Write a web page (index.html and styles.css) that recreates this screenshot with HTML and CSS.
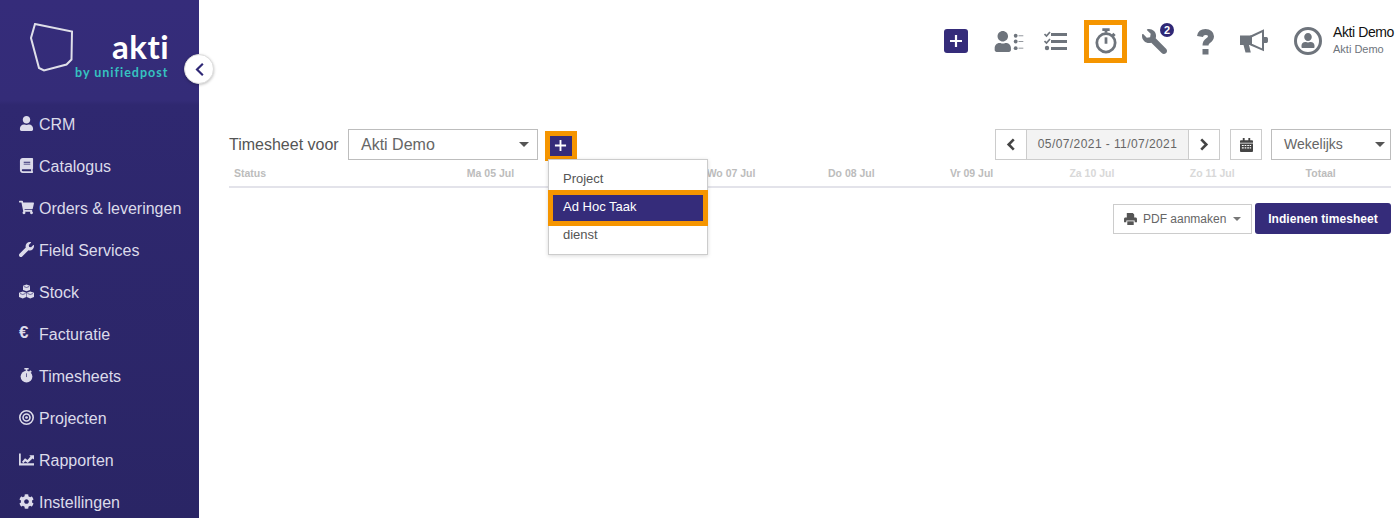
FILE: index.html
```html
<!DOCTYPE html>
<html lang="nl">
<head>
<meta charset="utf-8">
<title>Timesheet</title>
<link rel="stylesheet" href="styles.css">
</head>
<body>
<div class="app">
  <aside class="sidebar">
    <div class="brand">
      <svg class="brand-mark" viewBox="0 0 46 52"><path d="M5 1l37 7.500-.5 28-5 5L14 47.500 9 45 1 15z"/></svg>
      <div class="brand-name">akti</div>
      <div class="brand-sub">by unifiedpost</div>
    </div>
    <nav class="menu">
      <a class="menu-item"><svg class="mi" viewBox="0 0 448 512"><path d="M224 256c70.700 0 128-57.300 128-128S294.700 0 224 0 96 57.300 96 128s57.300 128 128 128zm89.600 32h-16.700c-22.200 10.200-46.900 16-72.900 16s-50.600-5.800-72.900-16h-16.700C60.200 288 0 348.200 0 422.400V464c0 26.500 21.500 48 48 48h352c26.500 0 48-21.500 48-48v-41.600c0-74.200-60.200-134.400-134.400-134.400z"/></svg>CRM</a>
      <a class="menu-item"><svg class="mi" viewBox="0 0 448 512"><path d="M448 360V24c0-13.300-10.700-24-24-24H96C43 0 0 43 0 96v320c0 53 43 96 96 96h328c13.300 0 24-10.700 24-24v-16c0-7.500-3.500-14.300-8.900-18.700-4.200-15.400-4.200-59.300 0-74.700 5.400-4.300 8.900-11.100 8.900-18.600zM128 134c0-3.300 2.700-6 6-6h212c3.300 0 6 2.700 6 6v20c0 3.300-2.700 6-6 6H134c-3.300 0-6-2.700-6-6v-20zm0 64c0-3.300 2.700-6 6-6h212c3.300 0 6 2.700 6 6v20c0 3.300-2.700 6-6 6H134c-3.300 0-6-2.700-6-6v-20zm253.400 250H96c-17.700 0-32-14.300-32-32 0-17.600 14.400-32 32-32h285.400c-1.900 17.100-1.900 46.900 0 64z"/></svg>Catalogus</a>
      <a class="menu-item"><svg class="mi" viewBox="0 0 576 512"><path d="M528.120 301.319l47.273-208C578.806 78.301 567.391 64 551.990 64H159.208l-9.166-44.810C147.758 8.021 137.930 0 126.529 0H24C10.745 0 0 10.745 0 24v16c0 13.255 10.745 24 24 24h69.883l70.248 343.435C147.325 417.100 136 435.222 136 456c0 30.928 25.072 56 56 56s56-25.072 56-56c0-15.674-6.447-29.835-16.824-40h209.647C430.447 426.165 424 440.326 424 456c0 30.928 25.072 56 56 56s56-25.072 56-56c0-22.172-12.888-41.332-31.579-50.405l5.517-24.276c3.413-15.018-8.002-29.319-23.403-29.319H218.117l-6.545-32h293.145c11.206 0 20.920-7.754 23.403-18.681z"/></svg>Orders &amp; leveringen</a>
      <a class="menu-item"><svg class="mi" viewBox="0 0 512 512"><path d="M507.730 109.100c-2.240-9.030-13.540-12.090-20.120-5.510l-74.360 74.360-67.880-11.310-11.310-67.880 74.360-74.360c6.620-6.620 3.430-17.900-5.660-20.160-47.380-11.740-99.550.91-136.580 37.930-39.640 39.640-50.550 97.100-34.050 147.200L18.740 402.760c-24.990 24.990-24.990 65.510 0 90.500 24.990 24.990 65.510 24.990 90.500 0l213.210-213.210c50.120 16.710 107.470 5.680 147.370-34.220 37.070-37.070 49.700-89.320 37.910-136.730z"/></svg>Field Services</a>
      <a class="menu-item"><svg class="mi" viewBox="0 0 30 30"><path d="M15 1l7 2.500V12l-7 2.500L8 12V3.500zM7.500 15l7 2.500V26l-7 3L0 26v-8.500zM22.500 15l7.500 2.500V26l-7.500 3-7-3v-8.500z"/><path class="mi-cut" d="M9.500 5L15 7l5.500-2M2 19l5.500 2 5.500-2M17 19l5.500 2 5.500-2"/></svg>Stock</a>
      <a class="menu-item"><span class="mi-euro">€</span>Facturatie</a>
      <a class="menu-item"><svg class="mi" viewBox="0 0 24 28"><path d="M8 0h8v3h-2.500v2.500h-3V3H8z"/><path d="M19 4l3 3-2.500 2.500-3-3z"/><circle cx="12" cy="16" r="11"/><path class="mi-cut" d="M12 10v7"/></svg>Timesheets</a>
      <a class="menu-item"><svg class="mi" viewBox="0 0 28 28"><circle class="mi-ring" cx="14" cy="14" r="12.500"/><circle class="mi-ring" cx="14" cy="14" r="6.500"/><circle cx="14" cy="14" r="2.500"/></svg>Projecten</a>
      <a class="menu-item"><svg class="mi" viewBox="0 0 30 24"><path d="M3.500 19.500H30V24H0V0h3.500z"/><path d="M6 16.500l6-7 5 3.500 6-7-2.500-2.500H30v8.500L27 10l-9.500 9-5-3.500-4 4z"/></svg>Rapporten</a>
      <a class="menu-item"><svg class="mi" viewBox="0 0 512 512"><path d="M487.400 315.700l-42.600-24.600c4.300-23.200 4.300-47 0-70.200l42.600-24.600c4.900-2.800 7.100-8.600 5.500-14-11.100-35.600-30-67.800-54.700-94.600-3.800-4.100-10-5.100-14.800-2.300L380.800 110c-17.900-15.400-38.500-27.300-60.800-35.100V25.800c0-5.600-3.900-10.500-9.400-11.700-36.700-8.200-74.300-7.800-109.200 0-5.500 1.200-9.400 6.100-9.400 11.700V75c-22.200 7.900-42.800 19.800-60.800 35.100L88.700 85.500c-4.900-2.800-11-1.900-14.800 2.300-24.700 26.700-43.600 58.900-54.700 94.600-1.700 5.400.6 11.200 5.500 14L67.300 221c-4.300 23.200-4.300 47 0 70.200l-42.600 24.600c-4.900 2.800-7.100 8.600-5.500 14 11.100 35.600 30 67.800 54.700 94.600 3.800 4.100 10 5.100 14.800 2.300l42.600-24.600c17.900 15.400 38.500 27.300 60.800 35.100v49.200c0 5.600 3.900 10.500 9.400 11.700 36.700 8.200 74.300 7.800 109.200 0 5.500-1.200 9.400-6.100 9.400-11.700v-49.200c22.200-7.900 42.800-19.800 60.800-35.100l42.600 24.600c4.900 2.800 11 1.900 14.800-2.300 24.700-26.700 43.600-58.900 54.700-94.600 1.500-5.500-.7-11.300-5.600-14.100zM256 336c-44.100 0-80-35.900-80-80s35.900-80 80-80 80 35.900 80 80-35.900 80-80 80z"/></svg>Instellingen</a>
    </nav>
    <button class="collapse"><svg viewBox="0 0 12 18"><path d="M10 2L3 9l7 7"/></svg></button>
  </aside>

  <main class="content">
    <header class="topbar">
      <button class="add-square"><svg viewBox="0 0 14 14"><path d="M7 1v12M1 7h12"/></svg></button>
      <svg class="ti ti-people" viewBox="0 0 30 22"><path d="M8.500 11c3 0 5.500-2.400 5.500-5.500S11.500 0 8.500 0 3 2.400 3 5.500 5.500 11 8.500 11zm3.500 1.500h-1c-.8.400-1.600.6-2.500.6s-1.700-.2-2.500-.6H5c-2.800 0-5 2.300-5 5.200V20c0 1.100.9 2 2 2h13c1.100 0 2-.9 2-2v-2.300c0-2.900-2.200-5.200-5-5.200z"/><circle cx="22" cy="5" r="2"/><circle cx="22" cy="11" r="2"/><circle cx="22" cy="18" r="2"/><path class="ti-thin" d="M25 5h5M25 11h5M25 18h5"/></svg>
      <svg class="ti ti-tasks" viewBox="0 0 24 20"><path class="ti-check" d="M.5 3l2 2L6 1M.5 10l2 2L6 8"/><circle cx="3" cy="17" r="2.200"/><path class="ti-bar" d="M7 3.500h16M7 10.500h16M7 17.500h16"/></svg>
      <div class="timer-box"><svg class="ti-timer" viewBox="0 0 24 28"><path class="ti-timer-s" d="M8 1.500h8M12 2v3M19 6l2.500 2.500"/><circle class="ti-timer-s" cx="12" cy="16" r="10"/><path class="ti-timer-s" d="M12 10v7"/></svg></div>
      <div class="wrench-wrap">
        <svg class="ti ti-wrench" viewBox="0 0 512 512"><path d="M507.730 109.100c-2.240-9.030-13.540-12.090-20.120-5.510l-74.360 74.360-67.880-11.310-11.310-67.880 74.360-74.360c6.620-6.620 3.430-17.900-5.660-20.160-47.380-11.740-99.550.91-136.580 37.930-39.640 39.640-50.550 97.100-34.050 147.200L18.740 402.760c-24.990 24.990-24.990 65.510 0 90.500 24.990 24.990 65.510 24.990 90.500 0l213.210-213.210c50.120 16.710 107.470 5.680 147.370-34.220 37.070-37.070 49.700-89.320 37.910-136.730z"/></svg>
        <span class="badge">2</span>
      </div>
      <svg class="ti ti-help" viewBox="0 0 17 26"><path class="ti-help-s" d="M3 7.500C3.500 4 5.500 3 8.500 3c3.500 0 5.500 1.800 5.500 4.300 0 2.200-1.200 3.300-3 4.500-1.800 1.200-2.500 2-2.500 4.700"/><rect x="5.500" y="20" width="6" height="5.500"/></svg>
      <svg class="ti ti-mega" viewBox="0 0 28 24"><path d="M0 6.500h11V16H9l1.800 7.500H5.500L3.500 16H0z"/><path class="ti-mega-s" d="M11 7.500L23 1.800v19L11 15.500z"/><path d="M24 8h2.500c1 0 1.500.8 1.500 3s-.5 3-1.500 3H24z"/></svg>
      <svg class="ti ti-user" viewBox="0 0 28 28"><circle class="ti-user-ring" cx="14" cy="14" r="12.500"/><path d="M14 14c2.200 0 3.800-1.800 3.800-4S16.200 6 14 6s-3.800 1.800-3.800 4 1.600 4 3.800 4zm2.600 1h-.6c-.6.300-1.300.5-2 .5s-1.400-.2-2-.5h-.6C9 15 7.500 16.600 7.500 18.500V20c0 .6.400 1 1 1h11c.6 0 1-.4 1-1v-1.500c0-1.900-1.500-3.500-3.900-3.500z"/></svg>
      <div class="account">
        <div class="account-name">Akti Demo</div>
        <div class="account-org">Akti Demo</div>
      </div>
    </header>

    <section class="toolbar">
      <label class="for-label">Timesheet voor</label>
      <div class="select select-user"><span>Akti Demo</span><i class="caret"></i></div>
      <div class="add-wrap">
        <button class="add-small"><svg viewBox="0 0 14 14"><path d="M7 1v12M1 7h12"/></svg></button>
        <ul class="dropdown">
          <li class="dropdown-item">Project</li>
          <li class="dropdown-item dropdown-item-active">Ad Hoc Taak</li>
          <li class="dropdown-item">dienst</li>
        </ul>
      </div>
      <div class="range">
        <button class="range-btn"><svg viewBox="0 0 10 14"><path d="M8 1.500L2.500 7 8 12.500"/></svg></button>
        <div class="range-value">05/07/2021 - 11/07/2021</div>
        <button class="range-btn"><svg viewBox="0 0 10 14"><path d="M2 1.500L7.500 7 2 12.500"/></svg></button>
      </div>
      <button class="cal-btn"><svg viewBox="0 0 14 15"><path d="M0 3.500a1 1 0 0 1 1-1h2V0h2v2.500h4V0h2v2.500h2a1 1 0 0 1 1 1V5H0z"/><path d="M0 6h14v8a1 1 0 0 1-1 1H1a1 1 0 0 1-1-1zm2 1.500v1.200h2V7.500zm3 0v1.200h1.800V7.500zm2.800 0v1.200h1.800V7.500zm2.600 0v1.200H12V7.500zM2 10v1.200h2V10zm3 0v1.200h1.800V10zm2.800 0v1.200h1.800V10zm2.600 0v1.200H12V10z" fill-rule="evenodd"/></svg></button>
      <div class="select select-period"><span>Wekelijks</span><i class="caret"></i></div>
    </section>

    <div class="thead">
      <div class="th th-status">Status</div>
      <div class="th">Ma 05 Jul</div>
      <div class="th"></div>
      <div class="th">Wo 07 Jul</div>
      <div class="th">Do 08 Jul</div>
      <div class="th">Vr 09 Jul</div>
      <div class="th th-weekend">Za 10 Jul</div>
      <div class="th th-weekend">Zo 11 Jul</div>
      <div class="th th-total">Totaal</div>
    </div>

    <div class="actions">
      <button class="btn-pdf"><svg viewBox="0 0 14 13"><path d="M3 0h6.500L11 1.500V5H3zM0 6.500C0 5.700.7 5 1.500 5h11c.8 0 1.500.7 1.500 1.500V10h-2.500V8h-9v2H0z"/><path d="M3.500 9h7v4h-7z"/></svg><span class="btn-pdf-label">PDF aanmaken</span><i class="caret caret-sm"></i></button>
      <button class="btn-submit">Indienen timesheet</button>
    </div>
  </main>
</div>
</body>
</html>
```
FILE: styles.css
```css
* { box-sizing: border-box; }
html, body { margin: 0; height: 100%; overflow: hidden; background: #fff; }
body { font-family: "Liberation Sans", Arial, sans-serif; color: #555; }
button { font-family: inherit; padding: 0; cursor: pointer; }
svg { display: block; }

.app { display: flex; height: 518px; }

/* Sidebar */
.sidebar {
  position: relative;
  flex: 0 0 199px;
  display: flex;
  flex-direction: column;
  background: linear-gradient(#352c7a 0, #342c78 100px, #2f2870 105px, #2a2565 100%);
}
.brand { position: relative; height: 104px; flex: none; }
.brand-mark {
  position: absolute; left: 30px; top: 23px;
  width: 46px; height: 52px;
  fill: none; stroke: #dfdfe9; stroke-width: 2;
}
.brand-name {
  position: absolute; left: 112px; top: 27px;
  font-family: Lato, sans-serif; font-weight: 700; font-size: 33px; line-height: 38px;
  color: #fff; letter-spacing: .5px;
}
.brand-sub {
  position: absolute; left: 75px; top: 65px;
  font-family: Lato, sans-serif; font-weight: 700; font-size: 12.500px; line-height: 16px;
  color: #36c2c0; letter-spacing: 1px; white-space: nowrap;
}
.menu { display: flex; flex-direction: column; }
.menu-item {
  display: flex; align-items: center;
  height: 42px; padding-left: 19px;
  font-size: 16px; color: #dcdbea; white-space: nowrap;
}
.mi { width: 15px; height: 15px; margin-right: 5px; fill: #dcdbea; flex: none; margin-top: -4px; overflow: visible; }
.mi-cut { fill: none; stroke: #2f2870; stroke-width: 1.300; }
.mi-ring { fill: none; stroke: #dcdbea; stroke-width: 3; }
.mi-euro { width: 20px; font-weight: 700; font-size: 17px; margin-top: -4px; color: #dcdbea; }
.collapse {
  position: absolute; left: 184px; top: 54px;
  width: 30px; height: 30px; border-radius: 50%;
  border: 1px solid #ddd; background: #fff;
  box-shadow: 0 1px 3px rgba(0,0,0,.25);
  display: flex; align-items: center; justify-content: center;
}
.collapse svg { width: 11px; height: 15px; fill: none; stroke: #2f2876; stroke-width: 2.600; }

/* Main */
.content { position: relative; flex: 1; padding: 0 8px 0 30px; min-width: 0; }
.topbar {
  display: flex; align-items: center; justify-content: flex-end;
  height: 129px; padding-bottom: 47px; margin-right: -2px;
}
.add-square {
  width: 24px; height: 24px; border: 0; border-radius: 3px; background: #352c7a;
  display: flex; align-items: center; justify-content: center;
}
.add-square svg { width: 14px; height: 14px; stroke: #fff; stroke-width: 2.200; fill: none; }
.ti { fill: #6e747c; flex: none; }
.ti-people { width: 30px; height: 21px; margin-left: 26px; margin-top: 1px; }
.ti-thin { stroke: #8e9399; stroke-width: 1; fill: none; }
.ti-tasks { width: 24px; height: 20px; margin-left: 20px; }
.ti-check { fill: none; stroke: #6e747c; stroke-width: 1.700; }
.ti-bar { fill: none; stroke: #6e747c; stroke-width: 3; }
.timer-box {
  width: 43px; height: 43px; margin-left: 16px;
  border: 5px solid #f59500;
  display: flex; align-items: center; justify-content: center;
}
.ti-timer { width: 22px; height: 26px; fill: none; }
.ti-timer-s { fill: none; stroke: #6e747c; stroke-width: 3; }
.wrench-wrap { position: relative; margin-left: 15px; }
.ti-wrench { width: 25px; height: 25px; transform: scaleX(-1); }
.badge {
  position: absolute; left: 18px; top: -6px;
  width: 14px; height: 14px; border-radius: 50%;
  background: #2f2876; color: #fff;
  font-size: 11px; font-weight: 700; line-height: 14px; text-align: center;
}
.ti-help { width: 17px; height: 26px; margin-left: 30px; margin-top: 2px; }
.ti-help-s { fill: none; stroke: #6e747c; stroke-width: 6; }
.ti-mega { width: 28px; height: 24px; margin-left: 26px; }
.ti-mega-s { fill: none; stroke: #6e747c; stroke-width: 2; }
.ti-user { width: 28px; height: 28px; margin-left: 26px; }
.ti-user-ring { fill: none; stroke: #6e747c; stroke-width: 3; }
.account { margin-left: 11px; width: 60px; white-space: nowrap; }
.account-name { font-size: 14px; line-height: 17px; color: #111; letter-spacing: -.4px; }
.account-org { font-size: 11px; line-height: 17px; color: #6e747c; }

.toolbar { display: flex; align-items: center; height: 31px; }
.for-label { font-size: 16px; color: #555; width: 119px; flex: none; }
.select {
  display: flex; align-items: center; justify-content: space-between;
  height: 31px; border: 1px solid #bdbdbd; background: #fff;
  font-size: 16px; color: #666; flex: none;
}
.select-user { width: 190px; padding: 0 8px 0 12px; }
.select-period { width: 120px; margin-left: 9px; font-size: 14px; padding: 0 5px 1px 12px; }
.caret {
  width: 0; height: 0; display: block;
  border-left: 5px solid transparent; border-right: 5px solid transparent; border-top: 5px solid #555;
}
.add-wrap { position: relative; margin-left: 7px; margin-right: auto; margin-top: 2px; flex: none; }
.add-small {
  display: flex; align-items: center; justify-content: center;
  width: 32px; height: 30px; border: 5px solid #f59500; background: #352c7a;
}
.add-small svg { width: 13px; height: 13px; margin-right: 1px; stroke: #fff; stroke-width: 2; fill: none; }
.dropdown {
  position: absolute; left: 3px; top: 28px; z-index: 5;
  width: 160px; height: 96px; margin: 0; padding: 5px 0;
  list-style: none; background: #fff;
  border: 1px solid #ccc; box-shadow: 0 1px 4px rgba(0,0,0,.15);
}
.dropdown-item { height: 28px; padding: 0 14px; font-size: 13px; line-height: 28px; color: #555; }
.dropdown-item-active {
  height: 36px; margin: -3px -1px -5px; padding: 0 10px;
  border: 5px solid #f59500; background: #352c7a; color: #fff; line-height: 24px;
}

.range { display: flex; height: 31px; border: 1px solid #ccc; flex: none; }
.range-btn {
  width: 30px; border: 0; background: #fff;
  display: flex; align-items: center; justify-content: center;
}
.range-btn svg { width: 10px; height: 13px; fill: none; stroke: #444; stroke-width: 2.800; }
.range-value {
  width: 163px; text-align: center; font-size: 12px; line-height: 29px; color: #666;
  background: #f3f3f3; border-left: 1px solid #ccc; border-right: 1px solid #ccc; letter-spacing: .42px; white-space: nowrap;
}
.cal-btn {
  width: 32px; height: 31px; margin-left: 10px; border: 1px solid #ccc; background: #fff;
  display: flex; align-items: center; justify-content: center;
}
.cal-btn svg { width: 13px; height: 14px; fill: #444; }

.thead {
  display: grid;
  grid-template-columns: 201.300px repeat(7, 120.300px) 1fr;
  height: 28px; border-bottom: 2px solid #e3e3ea;
  align-items: center;
}
.th { text-align: center; font-size: 10.500px; font-weight: 700; color: #bcbcbc; white-space: nowrap; }
.th-status { text-align: left; padding-left: 5px; }
.th-weekend { color: #d8d8d8; }
.th-total { padding-right: 22px; }

.actions { display: flex; justify-content: flex-end; align-items: center; gap: 3px; margin-top: 15px; }
.btn-pdf {
  display: flex; align-items: center;
  width: 139px; height: 30px; padding: 0 10px;
  border: 1px solid #ccc; background: #fff; color: #666; font-size: 12px;
}
.btn-pdf svg { width: 13px; height: 12px; fill: #555; margin-right: 6px; flex: none; }
.btn-pdf-label { white-space: nowrap; }
.caret-sm { border-left-width: 4px; border-right-width: 4px; border-top-width: 4px; border-top-color: #777; margin-left: 7px; flex: none; }
.btn-submit {
  width: 136px; height: 31px; border: 0; border-radius: 3px;
  background: #352c7a; color: #fff; font-size: 12px; font-weight: 700; letter-spacing: .05px; white-space: nowrap;
}
```
